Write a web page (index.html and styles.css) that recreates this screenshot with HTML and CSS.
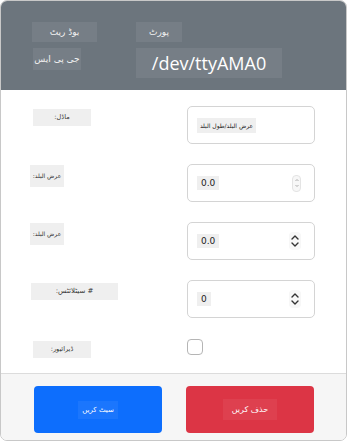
FILE: index.html
```html
<!DOCTYPE html>
<html lang="ur">
<head>
  <meta charset="UTF-8">
  <meta name="viewport" content="width=device-width, initial-scale=1.0">
  <title>جی پی ایس</title>
  <link rel="stylesheet" href="styles.css">
</head>
<body>
  <div class="card">
    <div class="card-header">
      <div class="head-grid">
        <div class="tag tag-baud">بوڈ ریٹ</div>
        <div class="tag tag-port">پورٹ</div>
        <div class="tag tag-gps">جی پی ایس</div>
        <div class="tag tag-dev">/dev/ttyAMA0</div>
      </div>
    </div>

    <div class="card-body">
      <div class="row">
        <div class="label w-model">ماڈل:</div>
        <div class="field">
          <span class="val val-text">عرض البلد/طول البلد</span>
        </div>
      </div>
      <div class="row">
        <div class="label w-lat">عرض البلد:</div>
        <div class="field field-num">
          <span class="val">0.0</span>
          <span class="spin spin-faint">
            <svg width="6" height="12" viewBox="0 0 6 12"><path d="M1.5 4 L3 2.5 L4.5 4 M1.5 8 L3 9.5 L4.5 8" fill="none" stroke="#999" stroke-width="0.8"/></svg>
          </span>
        </div>
      </div>
      <div class="row">
        <div class="label w-lat">عرض البلد:</div>
        <div class="field field-num">
          <span class="val">0.0</span>
          <span class="spin">
            <svg width="10" height="16" viewBox="0 0 10 16"><path d="M2 6 L5 3 L8 6 M2 10 L5 13 L8 10" fill="none" stroke="#333" stroke-width="1.4" stroke-linecap="round" stroke-linejoin="round"/></svg>
          </span>
        </div>
      </div>
      <div class="row">
        <div class="label w-sat"># سیٹلائٹس:</div>
        <div class="field field-num">
          <span class="val">0</span>
          <span class="spin">
            <svg width="10" height="16" viewBox="0 0 10 16"><path d="M2 6 L5 3 L8 6 M2 10 L5 13 L8 10" fill="none" stroke="#333" stroke-width="1.4" stroke-linecap="round" stroke-linejoin="round"/></svg>
          </span>
        </div>
      </div>
      <div class="row row-check">
        <div class="label w-model">ڈیرائیور:</div>
        <div><span class="check"></span></div>
      </div>
    </div>

    <div class="card-footer">
      <button class="btn btn-blue"><span>سیٹ کریں</span></button>
      <button class="btn btn-red"><span>حذف کریں</span></button>
    </div>
  </div>
</body>
</html>
```

FILE: styles.css
```css
body {
  margin: 0;
  background: #fff;
  font-family: "DejaVu Sans", "Open Sans", sans-serif;
}
.card {
  width: 345px;
  height: 439px;
  border: 1px solid #c8c8c8;
  border-radius: 7px;
  overflow: hidden;
  display: flex;
  flex-direction: column;
}
.card-header {
  background: #6c757d;
  height: 89px;
  padding: 21px 0 0 31px;
  box-sizing: border-box;
}
.head-grid {
  display: grid;
  grid-template-columns: 104px auto;
  row-gap: 6px;
  align-items: start;
}
.tag {
  background: rgba(255, 255, 255, 0.07);
  color: #f2f2f2;
  font-size: 9px;
  text-align: center;
  direction: rtl;
}
.tag-baud { width: 65px; height: 20px; line-height: 20px; }
.tag-port { width: 46px; height: 20px; line-height: 20px; }
.tag-gps { width: 48px; height: 22px; line-height: 22px; margin-left: 1px; }
.tag-dev {
  width: 146px;
  height: 30px;
  line-height: 30px;
  font-family: "Open Sans", sans-serif;
  font-size: 18px;
  direction: ltr;
  color: #fff;
}
.card-body {
  flex: 1;
  padding: 16px 32px 0 29px;
  background: #fff;
  border-bottom: 1px solid #dcdcdc;
}
.row {
  display: grid;
  grid-template-columns: 157px 128px;
  align-items: start;
  margin-bottom: 20px;
}
.label {
  background: #efefef;
  color: #333;
  font-size: 6.5px;
  text-align: center;
  direction: rtl;
  white-space: nowrap;
}
.w-model { width: 58px; height: 17px; line-height: 17px; margin-left: 3px; margin-top: 3px; }
.w-lat { width: 34px; height: 22px; line-height: 22px; margin-top: 1px; font-size: 6px; }
.w-sat { width: 87px; height: 17px; line-height: 17px; margin-left: 1px; margin-top: 3px; font-size: 7px; }
.field {
  height: 38px;
  border: 1px solid #d4d4d4;
  border-radius: 5px;
  box-sizing: border-box;
  display: flex;
  align-items: center;
  padding: 0 9px;
}
.val {
  background: #efefef;
  color: #222;
  font-size: 9px;
  padding: 2px 4px;
}
.val-text {
  font-size: 6px;
  padding: 4px 1px;
  direction: rtl;
  white-space: nowrap;
  width: 57px;
  text-align: center;
  overflow: hidden;
}
.field-num {
  justify-content: space-between;
  padding-right: 13px;
}
.spin {
  display: flex;
  align-items: center;
  justify-content: center;
  width: 12px;
  height: 18px;
  border-radius: 4px;
  background: #f7f7f7;
}
.spin-faint {
  width: 9px;
  height: 17px;
  border: 1px solid #e4e4e4;
  box-sizing: border-box;
}
.row-check { margin-bottom: 0; }
.check {
  display: block;
  width: 16px;
  height: 16px;
  border: 1px solid #b5b5b5;
  border-radius: 4px;
  box-sizing: border-box;
  margin-top: 1px;
}
.card-footer {
  background: #f6f6f6;
  height: 66px;
  display: flex;
  gap: 24px;
  padding: 12px 32px 0 33px;
  box-sizing: border-box;
}
.btn {
  width: 129px;
  height: 47px;
  border: none;
  border-radius: 4px;
  color: #fff;
  font-family: "DejaVu Sans", sans-serif;
  font-size: 8px;
  direction: rtl;
}
.btn span {
  display: inline-block;
  background: rgba(255, 255, 255, 0.06);
  padding: 5px 4px;
}
.btn-blue { background: #0d6efd; font-size: 7px; }
.btn-red { background: #dc3545; }
.btn-red span { padding: 6px 9px; }
```
